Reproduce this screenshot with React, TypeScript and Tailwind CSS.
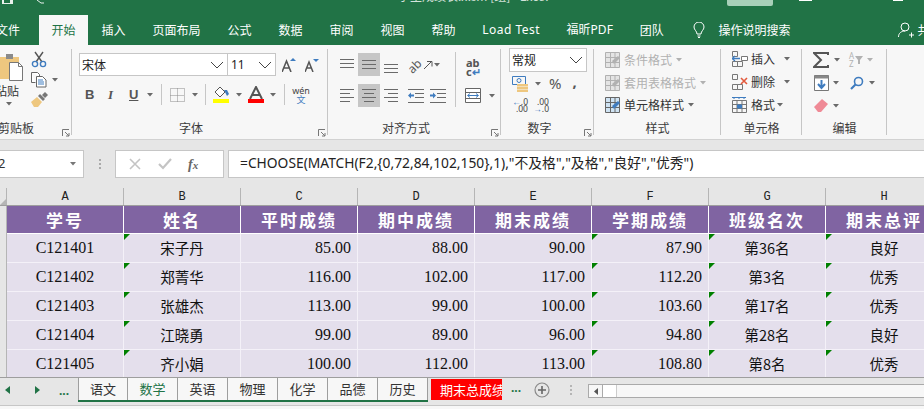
import React from "react";

const cjk = "font-['Noto_Sans_CJK_SC',sans-serif]";
const Dd = ({ className = "", c = "#6a6a6a" }: { className?: string; c?: string }) => (
  <svg width="6" height="4" viewBox="0 0 6 4" className={"shrink-0 " + className}><path d="M0 0h6L3 3.500z" fill={c} /></svg>
);
const Chevron = () => (
  <svg width="14" height="8" viewBox="0 0 14 8" className="shrink-0"><path d="M1 1l6 6 6-6" fill="none" stroke="#444" strokeWidth="1" /></svg>
);
const Launcher = () => (
  <svg width="8" height="8" viewBox="0 0 8 8" className="shrink-0"><path d="M0.500 7V0.500H7M3 3l4 4M4 7h3V4" fill="none" stroke="#777" strokeWidth="1" /></svg>
);
const VSep = ({ h = "h-[20px]" }: { h?: string }) => <div className={"w-px bg-[#c6c6c6] shrink-0 " + h} />;

const Lines = ({ kind }: { kind: "top" | "mid" | "bot" | "left" | "center" | "right" }) => {
  const y = kind === "top" ? [2, 6, 10] : kind === "bot" ? [7, 11, 15] : kind === "mid" ? [3, 7, 11] : [1, 5, 9, 13];
  return (
    <svg width="14" height="16" viewBox="0 0 14 16" className="shrink-0">
      {y.map((v, i) => {
        let x1 = 0, x2 = 14;
        if (i % 2 === 1 && kind === "left") x2 = 10;
        if (i % 2 === 1 && kind === "center") { x1 = 2; x2 = 12; }
        if (i % 2 === 1 && kind === "right") x1 = 4;
        return <path key={i} d={`M${x1} ${v + 0.5}H${x2}`} stroke="#6a6a6a" strokeWidth="1" />;
      })}
    </svg>
  );
};

const Group = ({ w, label, children, launcher, labelClass = "" }: { w: string; label: string; children: React.ReactNode; launcher?: boolean; labelClass?: string }) => (
  <div className={"relative flex flex-col shrink-0 h-full pt-[3px] " + w}>
    <div className="h-[73px] shrink-0">{children}</div>
    <div className={"h-[14px] flex items-center justify-center text-[12px] leading-[14px] text-[#3c3c3c] " + labelClass}>{label}</div>
    {launcher && <div className="absolute right-[2px] bottom-[2px] flex"><Launcher /></div>}
    <div className="absolute right-0 top-[4px] bottom-[4px] w-px bg-[#c6c6c6]" />
  </div>
);

const Clipboard = () => (
  <div className="flex h-full">
    <div className="w-[27px] shrink-0 overflow-hidden flex flex-col">
      <svg width="24" height="30" viewBox="0 0 24 30" className="mt-[5px] shrink-0">
        <path d="M0 4h19v22H0z" fill="#eec77f" />
        <path d="M6 1h7v5H6z" fill="#8a8a8a" />
        <path d="M9.500 9.500h9l4 4v14h-13z" fill="#fff" stroke="#777" />
        <path d="M18.500 9.500v4h4" fill="none" stroke="#777" />
      </svg>
      <span className="text-[12px] leading-[14px] text-[#333] ml-[-5px] mt-[1px] whitespace-nowrap">粘贴</span>
      <Dd className="ml-[6px] mt-[4px]" />
    </div>
    <div className="flex flex-col items-start gap-[4px] pl-[4px] pt-[3px]">
      <svg width="16" height="17" viewBox="0 0 16 17">
        <path d="M4 1l7 10M12 1L5 11" stroke="#555" strokeWidth="1.400" fill="none" />
        <circle cx="4" cy="13" r="2.600" fill="none" stroke="#3f7cbf" strokeWidth="1.400" />
        <circle cx="12" cy="13" r="2.600" fill="none" stroke="#3f7cbf" strokeWidth="1.400" />
      </svg>
      <div className="flex items-center gap-[5px]">
        <svg width="16" height="16" viewBox="0 0 16 16">
          <path d="M0.500 0.500h6l2 2v2M0.500 0.500v10h4" fill="#fff" stroke="#666" />
          <path d="M5.500 4.500h6l3.500 3.500v7H5.500z" fill="#fff" stroke="#666" />
          <path d="M7 8h5M7 10h6M7 12h6" stroke="#3f7cbf" />
        </svg>
        <Dd />
      </div>
      <svg width="17" height="15" viewBox="0 0 17 15">
        <path d="M0 10l6-5 5 5-4 5H3z" fill="#eec77f" />
        <path d="M7 4l5 5 2-2-5-5z" fill="#777" />
        <path d="M11 3l3-3 3 3-3 3z" fill="#777" />
      </svg>
    </div>
  </div>
);

const FontGroup = () => (
  <div className="flex flex-col pl-[7px] h-full">
    <div className="flex items-center mt-[5px] h-[23px]">
      <div className="w-[149px] h-[23px] bg-white border border-[#c6c6c6] flex items-center justify-between pl-[2px] pr-[3px] text-[12px] text-[#222]">
        <span>宋体</span><Chevron />
      </div>
      <div className="w-[48px] h-[23px] bg-white border border-l-0 border-[#c6c6c6] flex items-center justify-between pl-[3px] pr-[3px] text-[12px] text-[#222]">
        <span className="font-['Noto_Sans',sans-serif]">11</span><Chevron />
      </div>
      <svg width="14" height="14" viewBox="0 0 14 14" className="ml-[6px]">
        <path d="M0 14L4.500 3 9 14M2 10h5" fill="none" stroke="#555" strokeWidth="1.600" />
        <path d="M8 3l3-3 3 3z" fill="#3f7cbf" />
      </svg>
      <svg width="14" height="14" viewBox="0 0 14 14" className="ml-[9px]">
        <path d="M0 14L4 4l4 10M1.800 10h4.500" fill="none" stroke="#555" strokeWidth="1.500" />
        <path d="M8 1h6l-3 3z" fill="#3f7cbf" />
      </svg>
    </div>
    <div className="flex items-center mt-[6px] h-[25px] pl-[6px] text-[#555]">
      <span className="w-[8px] text-[13px] leading-none font-bold font-['Liberation_Sans',sans-serif]">B</span>
      <span className="w-[6px] ml-[15px] text-[13px] leading-none italic font-['Liberation_Serif',serif] font-bold">I</span>
      <span className="w-[9px] ml-[15px] text-[13px] leading-none underline font-bold font-['Liberation_Sans',sans-serif]">U</span>
      <Dd className="ml-[9px]" />
      <VSep h="h-[21px] ml-[8px]" />
      <svg width="15" height="14" viewBox="0 0 15 14" className="ml-[8px]">
        <path d="M0.500 0.500h14v13H0.500zM7.500 0.500v13M0.500 7.500h14" fill="none" stroke="#8a8a8a" strokeDasharray="1 1" />
      </svg>
      <Dd className="ml-[7px]" />
      <VSep h="h-[21px] ml-[7px]" />
      <div className="ml-[7px] flex flex-col w-[16px] items-center">
        <svg width="16" height="13" viewBox="0 0 16 13">
          <path d="M2 6l5-5 5 5-5 5z" fill="#fff" stroke="#555" />
          <path d="M11 4h3l2 4-2 2z" fill="#3f7cbf" />
        </svg>
        <div className="w-[16px] h-[4px] bg-[#ffff00]" />
      </div>
      <Dd className="ml-[7px]" />
      <div className="ml-[6px] flex flex-col w-[16px] items-center">
        <svg width="14" height="13" viewBox="0 0 14 13"><path d="M1 13L7 1l6 12M3.500 9h7" fill="none" stroke="#555" strokeWidth="2" /></svg>
        <div className="w-[16px] h-[4px] bg-[#ff0000]" />
      </div>
      <Dd className="ml-[6px]" />
      <VSep h="h-[21px] ml-[8px]" />
      <div className="ml-[7px] flex flex-col items-center w-[18px] leading-none">
        <span className="text-[9px] leading-[9px] text-[#444] font-['Noto_Sans',sans-serif]">wén</span>
        <span className="text-[9px] leading-[9px] text-[#3f7cbf]">文</span>
      </div>
    </div>
  </div>
);

const Indent = ({ dir }: { dir: "l" | "r" }) => (
  <svg width="16" height="14" viewBox="0 0 16 14" className="shrink-0">
    <path d="M0 0.500h16M7 4.500h9M7 8.500h9M0 13.500h16" stroke="#6a6a6a" />
    <path d={dir === "l" ? "M0 6.500l3-3v2h3v2H3v2z" : "M6 6.500l-3-3v2H0v2h3v2z"} fill="#3f7cbf" />
  </svg>
);

const Sel = ({ children }: { children: React.ReactNode }) => (
  <div className="w-[22px] h-[23px] bg-[#c6c6c6] flex items-center justify-center mx-[4px] shrink-0">{children}</div>
);

const Align = () => (
  <div className="flex h-full pl-[12px]">
    <div className="flex flex-col w-[114px] shrink-0">
      <div className="flex items-center mt-[5px] h-[23px]">
        <Lines kind="top" /><Sel><Lines kind="mid" /></Sel><Lines kind="bot" />
        <span className="ml-[9px] text-[12px] text-[#555] -rotate-45 w-[18px] leading-none shrink-0 font-['Noto_Sans',sans-serif]">ab</span>
        <svg width="9" height="10" viewBox="0 0 9 10" className="-ml-[1px]"><path d="M0 9l7-7M3 1.500h5v5" fill="none" stroke="#555" /></svg>
        <Dd className="ml-[1px]" />
      </div>
      <div className="flex items-center mt-[8px] h-[23px]">
        <Lines kind="left" /><Sel><Lines kind="center" /></Sel><Lines kind="right" />
        <div className="ml-[10px]"><Indent dir="l" /></div>
        <div className="ml-[6px]"><Indent dir="r" /></div>
      </div>
    </div>
    <div className="flex flex-col items-start w-[45px] shrink-0 ml-[1px] border-l border-[#c6c6c6] h-[55px] mt-[4px] pl-[9px]">
      <div className="flex flex-col text-[11px] leading-[9px] font-bold text-[#555] mt-[6px] font-['Noto_Sans',sans-serif] w-[16px] pl-[1px]">
        <span>ab</span>
        <span>c<span className="text-[#3f7cbf]">↵</span></span>
      </div>
      <div className="flex items-center mt-[12px]">
        <svg width="16" height="15" viewBox="0 0 16 15">
          <path d="M0.500 0.500h15v14H0.500zM0.500 4.500h15M0.500 10.500h15" fill="#fff" stroke="#666" />
          <path d="M3 7.500h10" stroke="#3f7cbf" />
          <path d="M5 5.500l-2.500 2 2.500 2M11 5.500l2.500 2-2.500 2" fill="none" stroke="#3f7cbf" />
        </svg>
        <Dd className="ml-[8px]" />
      </div>
    </div>
  </div>
);

const NumberG = () => (
  <div className="flex flex-col pl-[8px] h-full">
    <div className="w-[78px] h-[24px] bg-white border border-[#c6c6c6] flex items-center justify-between pl-[2px] pr-[3px] text-[12px] text-[#222]">
      <span>常规</span><Chevron />
    </div>
    <div className="flex items-center mt-[3px] pl-[3px] h-[17px]">
      <svg width="17" height="16" viewBox="0 0 17 16">
        <path d="M0.500 0.500h13v8H0.500z" fill="none" stroke="#3f7cbf" />
        <circle cx="7" cy="4.500" r="2" fill="none" stroke="#3f7cbf" />
        <path d="M5 8h11v2.500H5zM5 11h11v2H5zM5 13.500h11V16H5z" fill="#eec77f" />
      </svg>
      <Dd className="ml-[6px]" />
      <span className="ml-[8px] text-[15px] leading-none text-[#555] font-['Noto_Sans',sans-serif]">%</span>
      <span className="ml-[11px] text-[15px] leading-none font-bold text-[#555] -mt-[4px] font-['Noto_Sans',sans-serif]">,</span>
    </div>
    <div className="flex items-center mt-[6px] pl-[3px]">
      <div className="w-[16px] flex flex-col items-end text-[8.500px] leading-[7px] text-[#444] font-['Noto_Sans',sans-serif]">
        <span><span className="text-[#3f7cbf]">←</span>.0</span><span>.00</span>
      </div>
      <div className="w-[15px] ml-[6px] flex flex-col items-end text-[8.500px] leading-[7px] text-[#444] font-['Noto_Sans',sans-serif]">
        <span>.00</span><span><span className="text-[#3f7cbf]">→</span>.0</span>
      </div>
    </div>
  </div>
);

const StyleRow = ({ icon, label, dis }: { icon: React.ReactNode; label: string; dis?: boolean }) => (
  <div className={"flex items-center h-[20px] text-[12px] whitespace-nowrap " + (dis ? "text-[#b1b1b1]" : "text-[#333]")}>
    <div className="w-[19px] shrink-0 flex">{icon}</div>
    <span>{label}</span>
    <Dd className="ml-[4px]" c={dis ? "#b1b1b1" : "#6a6a6a"} />
  </div>
);
const TblIcon = ({ c = "#b1b1b1", fill = "#e4e4e4", acc = "#b1b1b1" }: { c?: string; fill?: string; acc?: string }) => (
  <svg width="15" height="16" viewBox="0 0 15 16">
    <path d="M0.500 0.500h14v15H0.500z" fill={fill} stroke={c} />
    <path d="M0.500 5.500h14M0.500 10.500h14M5.500 0.500v15M10 0.500v15" stroke={c} />
    <path d="M7 9l6-5 2 2-6 6z" fill={acc} />
  </svg>
);
const Styles = () => (
  <div className="flex flex-col pl-[11px] pt-[2px] gap-[2.500px]">
    <StyleRow dis icon={<TblIcon />} label="条件格式" />
    <StyleRow dis icon={<TblIcon />} label="套用表格格式" />
    <StyleRow icon={<TblIcon c="#666" fill="#cfe3f3" acc="#3f7cbf" />} label="单元格样式" />
  </div>
);

const CellIcon = ({ kind }: { kind: "ins" | "del" | "fmt" }) => (
  <svg width="16" height="16" viewBox="0 0 16 16">
    {kind === "fmt" ? (
      <>
        <path d="M0 0.500h14M2 0v2M7 0v2M12 0v2" stroke="#3f7cbf" />
        <path d="M0.500 3.500h14v12H0.500zM5 3.500v12M10 3.500v12M0.500 7.500h14M0.500 11.500h14" fill="none" stroke="#777" />
        <path d="M5 7.500h5v4H5z" fill="#3f7cbf" />
      </>
    ) : (
      <>
        <path d="M0.500 0.500h5v5h-5zM0.500 10.500h5v5h-5zM5.500 10.500h5v5h-5z" fill="none" stroke="#777" />
        {kind === "ins" ? (
          <>
            <path d="M9.500 5.500h6v4h-6z" fill="#fff" stroke="#777" />
            <path d="M0 7.500h8M3 5l-3 2.500L3 10" fill="none" stroke="#3f7cbf" strokeWidth="1.300" />
          </>
        ) : (
          <path d="M9 4l6 6M15 4l-6 6" stroke="#e2593c" strokeWidth="1.600" />
        )}
      </>
    )}
  </svg>
);
const Cells = () => (
  <div className="flex flex-col pl-[11px] pt-[3px] gap-[7px]">
    {([["ins", "插入", "ml-[9px]"], ["del", "删除", "ml-[9px]"], ["fmt", "格式", "ml-[2px]"]] as const).map(([k, t, m]) => (
      <div key={k} className="flex items-center h-[16px] text-[12px] text-[#333]">
        <CellIcon kind={k} /><span className="ml-[3px]">{t}</span><Dd className={m} />
      </div>
    ))}
  </div>
);
const Edit = () => (
  <div className="flex flex-col pl-[11px] pt-[3px] gap-[6px]">
    <div className="flex items-center h-[17px]">
      <svg width="16" height="16" viewBox="0 0 16 16"><path d="M15 3V1H1l7 7-7 7h14v-2" fill="none" stroke="#555" strokeWidth="2" /></svg>
      <Dd className="ml-[5px]" />
      <div className="ml-[9px] flex items-center">
        <div className="flex flex-col text-[8px] leading-[8px] text-[#b1b1b1] font-['Noto_Sans',sans-serif]"><span>A</span><span>Z</span></div>
        <svg width="8" height="8" viewBox="0 0 8 8" className="ml-[1px]"><path d="M0 0h8L5 4v4H3V4z" fill="#b1b1b1" /></svg>
        <Dd className="ml-[4px]" c="#b1b1b1" />
      </div>
    </div>
    <div className="flex items-center h-[17px]">
      <svg width="15" height="16" viewBox="0 0 15 16" className="ml-[1px]">
        <path d="M0.500 0.500h14v15H0.500z" fill="#fff" stroke="#777" />
        <path d="M0.500 0.500h14v3H0.500z" fill="#888" />
        <path d="M7.500 5v7M4 9l3.500 4L11 9" fill="none" stroke="#3f7cbf" strokeWidth="2" />
      </svg>
      <Dd className="ml-[4px]" />
      <svg width="14" height="14" viewBox="0 0 14 14" className="ml-[11px]">
        <circle cx="8.500" cy="5.500" r="4" fill="none" stroke="#3f7cbf" strokeWidth="1.600" />
        <path d="M5.500 8.500L1 13" stroke="#3f7cbf" strokeWidth="2.200" />
      </svg>
      <Dd className="ml-[5px]" />
    </div>
    <div className="flex items-center h-[17px]">
      <svg width="14" height="13" viewBox="0 0 14 13" className="ml-[1px]"><path d="M0 8l8-8 6 5-7 8H4z" fill="#ef8a96" /></svg>
      <Dd className="ml-[5px]" />
    </div>
  </div>
);

const tabs = ["插入", "页面布局", "公式", "数据", "审阅", "视图", "帮助", "Load Test", "福昕PDF", "团队"];
const cols = ["A", "B", "C", "D", "E", "F", "G", "H"];
const heads = ["学号", "姓名", "平时成绩", "期中成绩", "期末成绩", "学期成绩", "班级名次", "期末总评"];
const rows = [
  ["C121401", "宋子丹", "85.00", "88.00", "90.00", "87.90", "第36名", "良好"],
  ["C121402", "郑菁华", "116.00", "102.00", "117.00", "112.20", "第3名", "优秀"],
  ["C121403", "张雄杰", "113.00", "99.00", "100.00", "103.60", "第17名", "优秀"],
  ["C121404", "江晓勇", "99.00", "89.00", "96.00", "94.80", "第28名", "良好"],
  ["C121405", "齐小娟", "100.00", "112.00", "113.00", "108.80", "第8名", "优秀"],
];
const sheets = ["语文", "数学", "英语", "物理", "化学", "品德", "历史"];

const Cell = ({ i, v }: { i: number; v: string }) => {
  const num = i >= 2 && i <= 5;
  const tri = i === 1 || i >= 5;
  return (
    <div className={"relative w-[117px] shrink-0 h-full border-r border-[#f4f1f8] flex items-center text-[#111] " +
      (num ? "justify-end pr-[6px] " : "justify-center ") +
      (num || i === 0 ? "text-[16px] font-['Liberation_Serif',serif] " : "text-[14.500px] font-['Noto_Sans_CJK_SC',sans-serif] ")}>
      {tri && <div className="absolute left-0 top-0 w-0 h-0 border-t-[6px] border-r-[6px] border-t-[#008000] border-r-transparent" />}
      {v}
    </div>
  );
};

export default function App() {
  return (
    <div className={"w-[924px] h-[409px] overflow-hidden flex flex-col bg-[#e6e6e6] " + cjk}>
      <div className="h-[15px] shrink-0 bg-[#217346] flex items-start overflow-hidden text-white">
        <svg width="60" height="5" viewBox="0 0 60 5" className="shrink-0 opacity-90">
          <path d="M2 0h2v3h6V0h3v4H2z" fill="#fff" />
          <path d="M37 0l4 3h3" fill="none" stroke="#fff" />
        </svg>
        <span className="ml-[338px] -mt-[11px] text-[12px] leading-[14px] whitespace-nowrap w-[329px] shrink-0 opacity-80">学生成绩表.xlsm [组] - Excel</span>
        <div className="w-[46px] h-[6px] bg-[#a8d0b9] shrink-0 rounded-b-[2px]" />
        <div className="w-[13px] h-[1px] bg-white ml-[26px] shrink-0" />
        <div className="w-[10px] h-[1px] bg-white ml-[81px] shrink-0" />
      </div>
      <div className="h-[30px] shrink-0 bg-[#217346] flex items-center text-[12px] text-white whitespace-nowrap">
        <span className="w-[39px] shrink-0 -ml-[4px] leading-[30px]">文件</span>
        <div className="ml-[4px] w-[49px] h-[30px] bg-[#f7f7f7] text-[#217346] flex items-center justify-center shrink-0">开始</div>
        {tabs.map((t) => (
          <span key={t} className={"px-[13.500px] shrink-0 " + (t === "Load Test" ? "font-['Noto_Sans',sans-serif] tracking-[0.500px] w-[84px] !px-0 text-center" : t === "福昕PDF" ? "font-['Noto_Sans','Noto_Sans_CJK_SC',sans-serif]" : "")}>{t}</span>
        ))}
        <svg width="12" height="16" viewBox="0 0 12 16" className="ml-[16px] shrink-0">
          <path d="M4 12C4 9 1 8 1 5a5 5 0 0 1 10 0c0 3-3 4-3 7zM4.500 14h3M5 15.500h2" fill="none" stroke="#fff" />
        </svg>
        <span className="ml-[13px] shrink-0">操作说明搜索</span>
        <svg width="16" height="16" viewBox="0 0 16 16" className="ml-[108px] shrink-0">
          <circle cx="7" cy="5" r="4" fill="none" stroke="#fff" />
          <path d="M0.500 15c0-4 3-6 6.500-6M11 13h5M13.500 10.500v5" fill="none" stroke="#fff" />
        </svg>
        <span className="ml-[3px] shrink-0">共享</span>
      </div>
      <div className="h-[95px] shrink-0 bg-[#f7f7f7] border-b border-[#d2d2d2] flex overflow-hidden">
        <Group w="w-[72px]" label="剪贴板" launcher labelClass="!justify-start -ml-[2px]"><Clipboard /></Group>
        <Group w="w-[256px]" label="字体" launcher labelClass="pr-[18px]"><FontGroup /></Group>
        <Group w="w-[173px]" label="对齐方式" launcher labelClass="pr-[17px]"><Align /></Group>
        <Group w="w-[93px]" label="数字" launcher labelClass="pr-[16px]"><NumberG /></Group>
        <Group w="w-[127px]" label="样式"><Styles /></Group>
        <Group w="w-[81px]" label="单元格"><Cells /></Group>
        <Group w="w-[85px]" label="编辑"><Edit /></Group>
      </div>
      <div className="h-[48px] shrink-0 pt-[10px] flex items-start">
        <div className="w-[85px] h-[28px] bg-white border border-[#c6c6c6] border-l-0 flex items-center justify-between pr-[6px] -ml-[1px] shrink-0">
          <span className="text-[13px] text-[#333] -ml-[1px] font-['Noto_Sans',sans-serif]">2</span>
          <Dd className="w-[8px]" c="#777" />
        </div>
        <div className="w-[31px] h-[28px] flex flex-col items-center justify-center gap-[2px] shrink-0">
          <i className="w-[2px] h-[2px] bg-[#aaa]" /><i className="w-[2px] h-[2px] bg-[#aaa]" /><i className="w-[2px] h-[2px] bg-[#aaa]" />
        </div>
        <div className="w-[109px] h-[28px] bg-white border border-[#c6c6c6] flex items-center shrink-0">
          <svg width="12" height="12" viewBox="0 0 12 12" className="ml-[13px]"><path d="M1 1l10 10M11 1L1 11" stroke="#c4c4c4" strokeWidth="1.600" /></svg>
          <svg width="14" height="12" viewBox="0 0 14 12" className="ml-[17px]"><path d="M1 6l4 4 8-9" fill="none" stroke="#c4c4c4" strokeWidth="2.200" /></svg>
          <span className="ml-[16px] text-[14px] italic font-bold text-[#666] font-['Liberation_Serif',serif]">f<span className="text-[11px]">x</span></span>
        </div>
        <div className="ml-[4px] flex-1 h-[28px] pb-[1px] bg-white border border-[#c6c6c6] border-r-0 flex items-center pl-[11px] text-[13.800px] text-[#222] whitespace-nowrap font-['Noto_Sans','Noto_Sans_CJK_SC',sans-serif]">
          =CHOOSE(MATCH(F2,&#123;0,72,84,102,150&#125;,1),"不及格","及格","良好","优秀")
        </div>
      </div>
      <div className="flex-1 min-h-0 flex flex-col overflow-hidden">
        <div className="h-[18px] shrink-0 flex border-b border-[#9e9e9e] bg-[#e6e6e6]">
          <div className="w-[7px] shrink-0 border-r border-[#b5b5b5] flex items-end">
            <svg width="6" height="6" viewBox="0 0 6 6"><path d="M6 0v6H0z" fill="#b5b5b5" /></svg>
          </div>
          {cols.map((c) => (
            <div key={c} className="w-[117px] shrink-0 border-r border-[#b5b5b5] flex items-center justify-center text-[12px] text-[#222] font-['Liberation_Mono',monospace]">{c}</div>
          ))}
        </div>
        <div className="flex-1 min-h-0 flex overflow-hidden">
          <div className="w-[7px] shrink-0 bg-[#e6e6e6] border-r border-[#b5b5b5]" />
          <div className="flex flex-col min-w-0">
            <div className="h-[28px] shrink-0 flex bg-[#8064a2] border-b border-white">
              {heads.map((h) => (
                <div key={h} className="w-[117px] shrink-0 border-r border-white flex items-center justify-center text-white text-[17px] font-bold tracking-[2px]">{h}</div>
              ))}
            </div>
            {rows.map((r, idx) => (
              <div key={idx} className="h-[29px] shrink-0 flex bg-[#e4dfec] border-b border-[#f4f1f8]">
                {r.map((v, i) => <Cell key={i} i={i} v={v} />)}
              </div>
            ))}
          </div>
        </div>
      </div>
      <div className="h-[25px] shrink-0 flex items-start border-t border-[#9e9e9e] bg-[#e6e6e6]">
        <div className="w-[78px] h-[24px] flex items-center shrink-0 pl-[5px]">
          <svg width="5" height="8" viewBox="0 0 5 8"><path d="M5 0v8L0 4z" fill="#217346" /></svg>
          <svg width="5" height="8" viewBox="0 0 5 8" className="ml-[25px]"><path d="M0 0v8l5-4z" fill="#217346" /></svg>
          <span className="ml-[19px] mt-[1px] font-bold text-[12px] leading-none text-[#217346] font-['Noto_Sans',sans-serif]">...</span>
        </div>
        <div className="flex h-[24px] border-b-2 border-[#217346] shrink-0">
          {sheets.map((s) => (
            <div key={s} className={"w-[50px] h-full flex items-center justify-center text-[13px] border-r border-[#9e9e9e] bg-[#f7f7f7] " + (s === "数学" ? "text-[#217346]" : "text-[#333]") + (s === "语文" ? " border-l" : "")}>{s}</div>
          ))}
        </div>
        <div className="ml-[3px] w-[71px] h-[21px] mt-[1px] bg-[#ff0000] text-white text-[13px] leading-[21px] pl-[9px] overflow-hidden whitespace-nowrap shrink-0">期末总成绩</div>
        <span className="ml-[9px] mt-[4px] font-bold text-[12px] leading-none text-[#217346] font-['Noto_Sans',sans-serif]">...</span>
        <svg width="16" height="16" viewBox="0 0 16 16" className="ml-[13px] mt-[4px] shrink-0">
          <circle cx="8" cy="8" r="7" fill="none" stroke="#8a8a8a" strokeWidth="1.200" />
          <path d="M8 4v8M4 8h8" stroke="#666" strokeWidth="1.600" />
        </svg>
        <div className="ml-[20px] mt-[7px] flex flex-col gap-[2px] shrink-0">
          <i className="w-[2px] h-[2px] bg-[#b5b5b5]" /><i className="w-[2px] h-[2px] bg-[#b5b5b5]" /><i className="w-[2px] h-[2px] bg-[#b5b5b5]" />
        </div>
        <div className="ml-[16px] mt-[6px] h-[14px] flex-1 flex bg-[#f7f7f7] border-y border-l border-[#aaa]">
          <div className="w-[14px] border-r border-[#aaa] flex items-center justify-center"><svg width="4" height="7" viewBox="0 0 4 7"><path d="M4 0v7L0 3.500z" fill="#555" /></svg></div>
          <div className="w-[14px] bg-white border-r border-[#ccc]" />
        </div>
      </div>
      <div className="h-[4px] shrink-0 bg-[#e6e6e6] border-b border-[#c6c6c6]" />
      <div className="h-[3px] shrink-0 bg-[#f7f7f7]" />
    </div>
  );
}
